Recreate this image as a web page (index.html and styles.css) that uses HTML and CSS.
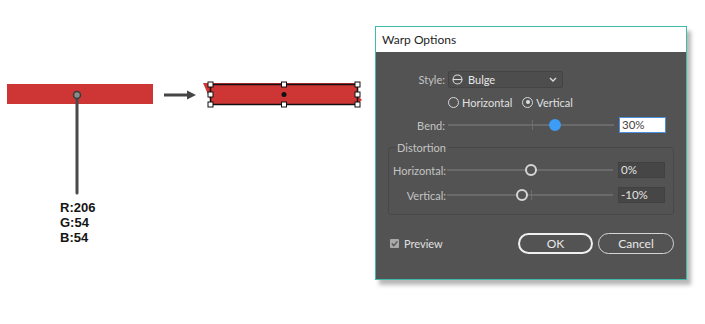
FILE: index.html
```html
<!DOCTYPE html>
<html lang="en">
<head>
    <meta charset="UTF-8">
    <title>Warp Options</title>
    <link rel="stylesheet" href="styles.css">
</head>
<body>
<div class="page">

    <!-- Illustration: colour sample, arrow, warped shape -->
    <svg class="canvas" width="375" height="324" viewBox="0 0 375 324">
        <rect x="7" y="84" width="146" height="20" fill="#ce3636"/>
        <line x1="77" y1="98" x2="77" y2="193" stroke="#4a4a4a" stroke-width="3" stroke-linecap="round"/>
        <circle cx="77" cy="95" r="3.5" fill="#8a8a8a" stroke="#3a3a3a" stroke-width="1.5"/>
        <text x="60" y="212" class="rgb">R:206</text>
        <text x="60" y="227" class="rgb">G:54</text>
        <text x="60" y="242" class="rgb">B:54</text>

        <line x1="164" y1="95" x2="189" y2="95" stroke="#454545" stroke-width="3"/>
        <polygon points="187,90.5 196,95 187,99.5" fill="#454545"/>

        <path d="M203 83 L358 83 L358 96 L362 100 L357 104 L211 104 L210 99 Z" fill="#ce3636"/>
        <rect x="210.5" y="84.5" width="147" height="20" fill="none" stroke="#111" stroke-width="1.5"/>
        <g fill="#fff" stroke="#111" stroke-width="1">
            <rect x="208" y="82" width="5" height="5"/>
            <rect x="281.5" y="82" width="5" height="5"/>
            <rect x="355" y="82" width="5" height="5"/>
            <rect x="208" y="92" width="5" height="5"/>
            <rect x="355" y="92" width="5" height="5"/>
            <rect x="208" y="102" width="5" height="5"/>
            <rect x="281.5" y="102" width="5" height="5"/>
            <rect x="355" y="102" width="5" height="5"/>
        </g>
        <circle cx="284" cy="94.5" r="2.5" fill="#111"/>
    </svg>

    <!-- Dialog -->
    <div class="dialog">
        <div class="titlebar">Warp Options</div>
        <div class="dialog-body">

            <div class="row style-row">
                <span class="lbl">Style:</span>
                <div class="dropdown">
                    <svg class="bulge-icon" width="11" height="11" viewBox="0 0 11 11">
                        <circle cx="5.5" cy="5.5" r="4.5" fill="none" stroke="#dcdcdc" stroke-width="1.1"/>
                        <line x1="1" y1="5.5" x2="10" y2="5.5" stroke="#dcdcdc" stroke-width="1.1"/>
                    </svg>
                    <span class="dd-text">Bulge</span>
                    <svg class="chevron" width="8" height="5" viewBox="0 0 8 5">
                        <polyline points="1,1 4,4 7,1" fill="none" stroke="#dcdcdc" stroke-width="1.4"/>
                    </svg>
                </div>
            </div>

            <div class="row radio-row">
                <span class="radio"></span><span class="radio-text">Horizontal</span>
                <span class="radio checked"></span><span class="radio-text">Vertical</span>
            </div>

            <div class="row slider-row bend-row">
                <span class="lbl">Bend:</span>
                <div class="slider">
                    <span class="tick"></span>
                    <span class="thumb blue" style="left: 107px;"></span>
                </div>
                <div class="field active">30%</div>
            </div>

            <div class="group">
                <span class="legend">Distortion</span>
                <div class="row slider-row">
                    <span class="lbl small">Horizontal:</span>
                    <div class="slider">
                        <span class="tick"></span>
                        <span class="thumb" style="left: 84px;"></span>
                    </div>
                    <div class="field">0%</div>
                </div>
                <div class="row slider-row second">
                    <span class="lbl small">Vertical:</span>
                    <div class="slider">
                        <span class="tick"></span>
                        <span class="thumb" style="left: 75px;"></span>
                    </div>
                    <div class="field">-10%</div>
                </div>
            </div>

            <div class="row footer">
                <span class="checkbox">
                    <svg width="9" height="9" viewBox="0 0 9 9">
                        <polyline points="1.8,4.6 3.8,6.6 7.4,2.4" fill="none" stroke="#555" stroke-width="1.4"/>
                    </svg>
                </span>
                <span class="check-text">Preview</span>
                <button class="btn ok">OK</button>
                <button class="btn">Cancel</button>
            </div>

        </div>
    </div>

</div>
</body>
</html>
```

FILE: styles.css
```css
body {
    margin: 0;
    background: #fff;
    font-family: Lato, "Open Sans", sans-serif;
}
.page {
    display: flex;
    align-items: flex-start;
    width: 705px;
    height: 324px;
}
.canvas {
    display: block;
    flex: none;
}
.rgb {
    font-family: "Liberation Sans", Arial, sans-serif;
    font-weight: bold;
    font-size: 13px;
    fill: #151515;
}
.dialog {
    margin-top: 26px;
    width: 310px;
    height: 252px;
    border: 1px solid #3fbaa8;
    background: #535353;
    box-shadow: 4px 5px 4px rgba(0, 0, 0, 0.28);
    display: flex;
    flex-direction: column;
}
.titlebar {
    height: 25px;
    background: #fff;
    color: #1e1e1e;
    font-size: 12px;
    line-height: 26px;
    padding-left: 6px;
}
.dialog-body {
    flex: 1;
    padding-top: 19px;
    color: #c4c4c4;
    font-size: 11px;
}
.row {
    display: flex;
    align-items: center;
}
.lbl {
    width: 69px;
    margin-right: 3px;
    text-align: right;
    flex: none;
}
.lbl.small {
    width: 57px;
    margin-right: 1px;
}
.dropdown {
    width: 113px;
    height: 15px;
    border: 1px solid #444;
    border-radius: 2px;
    background: #4d4d4d;
    display: flex;
    align-items: center;
    color: #e8e8e8;
}
.bulge-icon {
    margin-left: 3px;
}
.dd-text {
    margin-left: 5px;
    flex: 1;
}
.chevron {
    margin-right: 5px;
}
.radio-row {
    margin-top: 7px;
    height: 14px;
    padding-left: 72px;
    color: #e0e0e0;
}
.radio {
    width: 9px;
    height: 9px;
    border: 1.3px solid #d8d8d8;
    border-radius: 50%;
    position: relative;
    margin-right: 3px;
}
.radio.checked {
    margin-left: 10px;
}
.radio.checked::after {
    content: "";
    position: absolute;
    left: 2.5px;
    top: 2.5px;
    width: 4px;
    height: 4px;
    border-radius: 50%;
    background: #e0e0e0;
}
.slider-row {
    height: 16px;
}
.bend-row {
    margin-top: 8px;
}
.slider {
    width: 166px;
    height: 2px;
    background: #6a6a6a;
    position: relative;
    flex: none;
}
.tick {
    position: absolute;
    left: 84px;
    top: -4px;
    width: 1px;
    height: 10px;
    background: #6e6e6e;
}
.thumb {
    position: absolute;
    top: -5px;
    width: 8px;
    height: 8px;
    border: 2px solid #d6d6d6;
    border-radius: 50%;
    background: #535353;
    margin-left: -6px;
}
.thumb.blue {
    background: #3c9cf6;
    border-color: #3c9cf6;
}
.field {
    margin-left: 5px;
    width: 43px;
    height: 14px;
    line-height: 14px;
    padding-left: 2px;
    border: 1px solid #414141;
    background: #464646;
    color: #e2e2e2;
    font-size: 11.5px;
}
.field.active {
    background: #fff;
    border-color: #4a8fdd;
    color: #444;
    height: 14px;
}
.group {
    position: relative;
    margin: 14px 0 0 12px;
    width: 284px;
    border: 1px solid #484848;
    border-radius: 3px;
    padding: 14px 0 11px 0;
}
.legend {
    position: absolute;
    left: 8px;
    top: -7px;
    background: #535353;
    padding-right: 2px;
    line-height: 13px;
}
.group .second {
    margin-top: 9px;
}
.footer {
    margin-top: 18px;
    padding-left: 14px;
    height: 21px;
}
.checkbox {
    width: 9px;
    height: 9px;
    background: #a9a9a9;
    border-radius: 1px;
    display: flex;
}
.check-text {
    margin-left: 5px;
    color: #e0e0e0;
    flex: 1;
}
.btn {
    width: 75px;
    height: 21px;
    margin-right: 5px;
    border: 1px solid #d4d4d4;
    border-radius: 11px;
    background: transparent;
    color: #e8e8e8;
    font-family: Lato, "Open Sans", sans-serif;
    font-size: 12px;
    padding: 0;
}
.btn.ok {
    border: 2px solid #f0f0f0;
}
.btn:last-child {
    width: 76px;
    margin-right: 12px;
}
```
